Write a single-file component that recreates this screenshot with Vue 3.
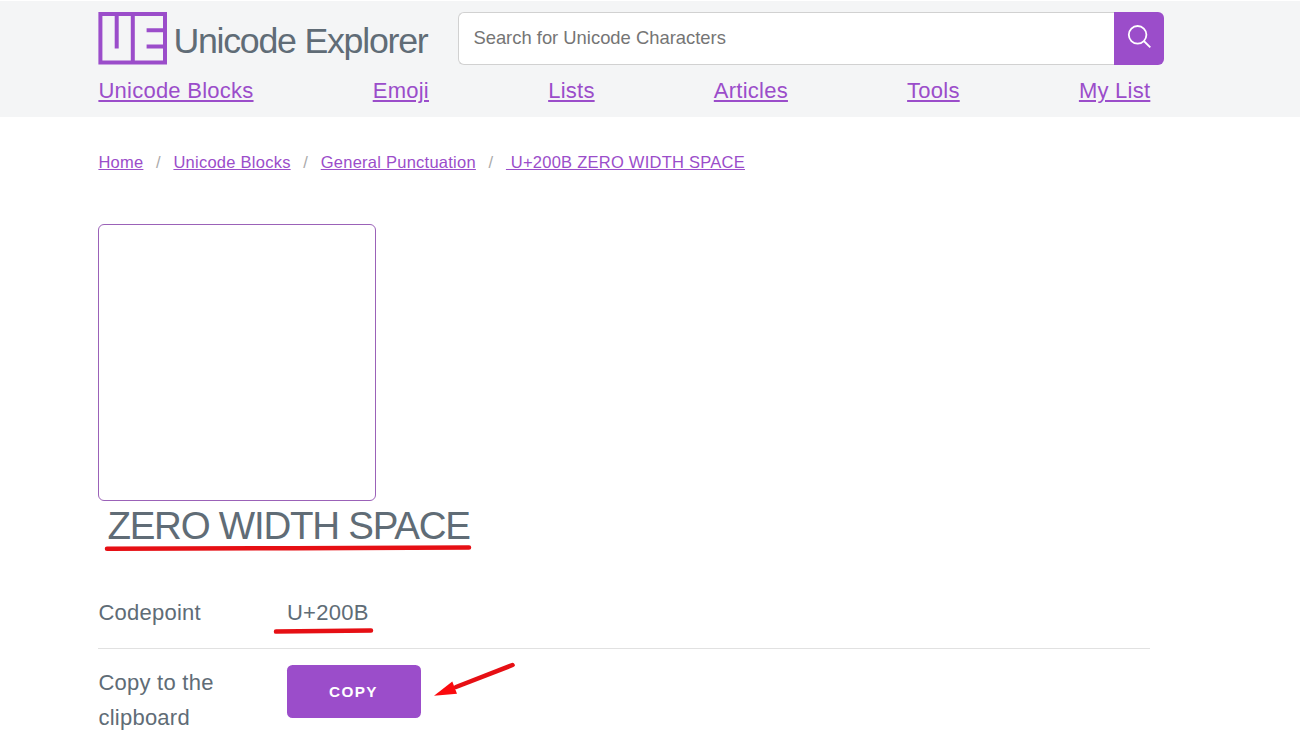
<script setup>
import { ref } from 'vue'

const search = ref('')

const navLinks = ['Unicode Blocks', 'Emoji', 'Lists', 'Articles', 'Tools', 'My List']
const breadcrumbs = ['Home', 'Unicode Blocks', 'General Punctuation', '\u00a0U+200B ZERO WIDTH SPACE']

function copyCharacter() {
  navigator.clipboard.writeText('\u200b')
}
</script>

<template>
  <div class="page">
    <header class="header">
      <div class="container">
        <div class="top-row">
          <a class="logo">
            <svg class="logo-mark" width="69" height="53" viewBox="0 0 69 53">
              <path
                d="M2.4 2H67V50.5H2.4ZM34.8 2V51M18.7 2V36.4M48.6 18.2H67M48.6 34.4H67"
                fill="none"
                stroke="#9b4dca"
                stroke-width="4"
              />
            </svg>
            <span class="logo-text">Unicode Explorer</span>
          </a>
          <form class="search" @submit.prevent>
            <input v-model="search" type="text" placeholder="Search for Unicode Characters" />
            <button type="submit" aria-label="Search">
              <svg width="24" height="24" viewBox="0 0 24 24" fill="none" stroke="#fff" stroke-width="1.8">
                <circle cx="10.6" cy="9.8" r="8.8" />
                <path d="M16.8 16L23.3 22.3" />
              </svg>
            </button>
          </form>
        </div>
        <nav class="nav">
          <a v-for="link in navLinks" :key="link" href="#">{{ link }}</a>
        </nav>
      </div>
    </header>

    <main class="container">
      <ul class="breadcrumbs">
        <li v-for="crumb in breadcrumbs" :key="crumb"><a href="#">{{ crumb }}</a></li>
      </ul>

      <div class="glyph"></div>
      <h1>
        <span class="marked">ZERO WIDTH SPACE
          <svg class="title-mark" width="368" height="8" viewBox="0 0 368 8">
            <path d="M3 4.7L190 4.2L365 3.6" />
          </svg>
        </span>
      </h1>

      <div class="row">
        <div class="label">Codepoint</div>
        <div class="value">
          <span class="marked">U+200B
            <svg class="code-mark" width="102" height="8" viewBox="0 0 102 8">
              <path d="M3 4.6L50 4L98 3.5" />
            </svg>
          </span>
        </div>
      </div>
      <div class="row copy-row">
        <div class="label">Copy to the clipboard</div>
        <div class="value">
          <span class="marked">
            <button class="copy" @click="copyCharacter">Copy</button>
            <svg class="arrow" width="84" height="38" viewBox="0 0 84 38">
              <path d="M78.5 4L22 26" />
              <path class="head" d="M0 34.7L18.3 20.5L23 32.8Z" />
            </svg>
          </span>
        </div>
      </div>
    </main>
  </div>
</template>

<style>
body {
  margin: 0;
  overflow: hidden;
}
</style>

<style scoped>
* {
  box-sizing: border-box;
}
.page {
  height: 740px;
  padding-top: 1px;
  overflow: hidden;
  background: #fff;
  color: #606c76;
  font-family: "Liberation Sans", Arial, sans-serif;
  font-size: 22px;
  letter-spacing: 0.25px;
}
a {
  color: #9b4dca;
}
.header {
  height: 116px;
  padding-top: 11px;
  background: #f4f5f6;
}
.container {
  width: 1052px;
  margin-left: 98.4px;
}
.top-row {
  display: flex;
  width: 1066px;
  height: 53px;
}
.logo {
  display: flex;
  width: 360px;
  color: #606c76;
}
.logo-text {
  margin-left: 6px;
  font-size: 35.75px;
  line-height: 58px;
  letter-spacing: -1.26px;
  white-space: nowrap;
}
.search {
  display: flex;
  flex: 1;
}
.search input {
  flex: 1;
  height: 53px;
  padding: 0 14px 2px;
  border: 1px solid #d1d1d1;
  border-right: 0;
  border-radius: 6px 0 0 6px;
  background: #fff;
  color: #606c76;
  font-family: inherit;
  font-size: 18.4px;
  outline: none;
}
.search input::placeholder {
  color: #757575;
}
.search button {
  width: 50px;
  height: 53px;
  padding: 0 0 4px;
  border: 0;
  border-radius: 0 6px 6px 0;
  background: #9b4dca;
}
.search svg {
  display: block;
  margin: 0 auto;
}
.nav {
  display: flex;
  justify-content: space-between;
  line-height: 26px;
  padding-top: 13px;
}
.breadcrumbs {
  display: flex;
  margin: 0;
  padding: 35px 0 0;
  list-style: none;
  font-size: 16.5px;
  line-height: 20px;
  letter-spacing: 0.25px;
}
.breadcrumbs li + li::before {
  content: "/";
  padding: 0 12.6px;
  color: #aaa;
}
.glyph {
  width: 277.4px;
  height: 277px;
  margin-top: 52px;
  border: 1px solid #9b62b8;
  border-radius: 6px;
}
h1 {
  margin: 0;
  padding-left: 9px;
  font-size: 38.5px;
  font-weight: 400;
  line-height: 49px;
  letter-spacing: -1.24px;
}
.marked {
  position: relative;
  display: inline-block;
}
.marked svg {
  position: absolute;
  fill: none;
  stroke: #e60f14;
  stroke-width: 4.5;
  stroke-linecap: round;
}
.marked .title-mark {
  left: -3px;
  top: 43px;
}
.marked .code-mark {
  left: -14px;
  top: 32px;
}
.marked .arrow {
  left: 147px;
  top: -4px;
}
.marked .head {
  fill: #fb0a0e;
  stroke: none;
}
.row {
  display: flex;
  padding: 45px 0 18px;
  border-bottom: 1px solid #e1e1e1;
  line-height: 35px;
}
.label {
  width: 160px;
  margin-right: 28.6px;
}
.copy-row {
  padding-top: 16px;
  border-bottom: 0;
}
.copy {
  display: block;
  width: 134px;
  height: 53px;
  padding: 1px 1px 0 0;
  border: 0;
  border-radius: 5.5px;
  background: #9b4dca;
  color: #fff;
  font-family: inherit;
  font-size: 15.3px;
  font-weight: 700;
  letter-spacing: 1.38px;
  text-transform: uppercase;
}
</style>
